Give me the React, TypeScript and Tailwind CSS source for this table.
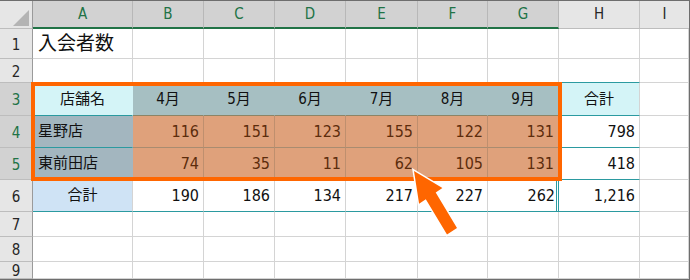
import React from "react";

const FONT = "font-['DejaVu_Sans_Condensed','Noto_Sans_CJK_JP',sans-serif]";

const months = ["4月", "5月", "6月", "7月", "8月", "9月"];
const stores: { name: string; values: number[]; total: string }[] = [
  { name: "星野店", values: [116, 151, 123, 155, 122, 131], total: "798" },
  { name: "東前田店", values: [74, 35, 11, 62, 105, 131], total: "418" },
];
const sums = [190, 186, 134, 217, 227, 262];
const letters = ["A", "B", "C", "D", "E", "F", "G"];

function C({ className = "", children }: { className?: string; children?: React.ReactNode }) {
  return <div className={`flex items-center overflow-visible whitespace-nowrap ${className}`}>{children}</div>;
}

function RowHead({ n, selected }: { n: number; selected?: boolean }) {
  return (
    <C
      className={
        selected
          ? "justify-center pt-[3px] text-[15px] bg-[#d2d2d2] text-[#217346] border-r border-b border-r-[#9a9a9a] border-b-[#bdbdbd]"
          : "justify-center pt-[3px] text-[15px] bg-[#e6e6e6] text-[#262626] border-r border-b border-r-[#9a9a9a] border-b-[#bdbdbd]"
      }
    >
      {n}
    </C>
  );
}

const plain = "border-r border-b border-[#d4d4d4]";

export default function App() {
  return (
    <div className={`relative w-[690px] h-[280px] overflow-hidden bg-white border-t border-r border-b border-[#6e6e6e] text-[#111] ${FONT}`}>
      <div className="grid grid-cols-[33px_100px_71px_71px_71px_72px_70px_71px_81px_49px] grid-rows-[28px_30px_24px_33px_32px_32px_32px_25px_25px_17px]">
        {/* column headers */}
        <div className="relative bg-[#e6e6e6] border-r border-b border-r-[#9a9a9a] border-b-[#bdbdbd]">
          <svg className="absolute left-0 top-0" width="32" height="27" viewBox="0 0 32 27">
            <polygon points="13,25 29,25 29,9" fill="#b4b4b4" />
          </svg>
        </div>
        {letters.map((l) => (
          <C key={l} className="justify-center text-[15px] bg-[#d2d2d2] text-[#217346] border-r border-r-[#b8b8b8] border-b-2 border-b-[#217346]">
            {l}
          </C>
        ))}
        <C className="justify-center text-[15px] bg-[#e6e6e6] text-[#262626] border-r border-b border-r-[#c4c4c4] border-b-[#bdbdbd]">H</C>
        <C className="justify-center text-[15px] bg-[#e6e6e6] text-[#262626] border-b border-b-[#bdbdbd]">I</C>

        {/* row 1 */}
        <RowHead n={1} />
        <C className={`pl-[5px] text-[19px] ${plain}`}>入会者数</C>
        {[0, 1, 2, 3, 4, 5, 6, 7].map((i) => (
          <div key={i} className={plain} />
        ))}

        {/* row 2 */}
        <RowHead n={2} />
        {[0, 1, 2, 3, 4, 5, 6].map((i) => (
          <div key={i} className={plain} />
        ))}
        <div className="border-r border-b border-r-[#d4d4d4] border-b-[#2b9aa0]" />
        <div className={plain} />

        {/* row 3: header labels */}
        <RowHead n={3} selected />
        <C className="justify-center text-[15px] bg-[#d4f4f7] border-r border-b border-r-transparent border-b-[#2b9aa0]">店舗名</C>
        {months.map((m) => (
          <C key={m} className="justify-center text-[15px] bg-[#a6bfc2] border-r border-b border-r-transparent border-b-[#8c8466]">
            {m}
          </C>
        ))}
        <C className="justify-center text-[15px] bg-[#d4f4f7] border-r border-b border-r-[#d4d4d4] border-b-[#2b9aa0]">合計</C>
        <div className={plain} />

        {/* rows 4-5: stores */}
        {stores.map((s, r) => (
          <React.Fragment key={s.name}>
            <RowHead n={4 + r} selected />
            <C className="pl-[5px] text-[15px] bg-[#a3b6bf] border-r border-b border-r-transparent border-b-[#2b9aa0]">{s.name}</C>
            {s.values.map((v, i) => (
              <C key={i} className="justify-end pr-[4px] text-[16px] text-[#5c2c0c] bg-[#dfa17b] border-r border-b border-r-[#bf8f6e] border-b-[#a98c70]">
                {v}
              </C>
            ))}
            <C className="justify-end pr-[4px] text-[16px] border-r border-b border-r-[#d4d4d4] border-b-[#2b9aa0]">{s.total}</C>
            <div className={plain} />
          </React.Fragment>
        ))}

        {/* row 6: totals */}
        <RowHead n={6} />
        <C className="justify-center text-[15px] bg-[#cfe3f5] border-r border-b border-r-[#d4d4d4] border-b-[#2b9aa0]">合計</C>
        {sums.map((v, i) =>
          i < 5 ? (
            <C key={i} className="justify-end pr-[4px] text-[16px] border-r border-b border-r-[#d4d4d4] border-b-[#2b9aa0]">
              {v}
            </C>
          ) : (
            <C key={i} className="justify-end pr-[1px] text-[16px] border-r-[3px] border-double border-b border-r-[#2b9aa0] border-b-[#2b9aa0]">
              {v}
            </C>
          )
        )}
        <C className="justify-end pr-[4px] text-[16px] border-r border-b border-r-[#d4d4d4] border-b-[#2b9aa0]">1,216</C>
        <div className={plain} />

        {/* rows 7-9: empty */}
        {[7, 8, 9].map((n) => (
          <React.Fragment key={n}>
            <RowHead n={n} />
            {[0, 1, 2, 3, 4, 5, 6, 7, 8].map((i) => (
              <div key={i} className={plain} />
            ))}
          </React.Fragment>
        ))}
      </div>

      {/* highlighted range */}
      <div className="absolute left-[31px] top-[81px] w-[531px] h-[99px] border-4 border-[#ff6600] pointer-events-none" />

      {/* pointer arrow */}
      <svg className="absolute left-0 top-[-1px] pointer-events-none" width="690" height="280" viewBox="0 0 690 280">
        <polygon
          points="414,171 442.4,188.1 435.7,192.6 457,228 447,234.6 425.8,199.3 419.1,203.7"
          fill="#ff6600"
          stroke="#ffffff"
          strokeWidth="3"
          strokeLinejoin="miter"
          paintOrder="stroke"
        />
      </svg>
    </div>
  );
}
